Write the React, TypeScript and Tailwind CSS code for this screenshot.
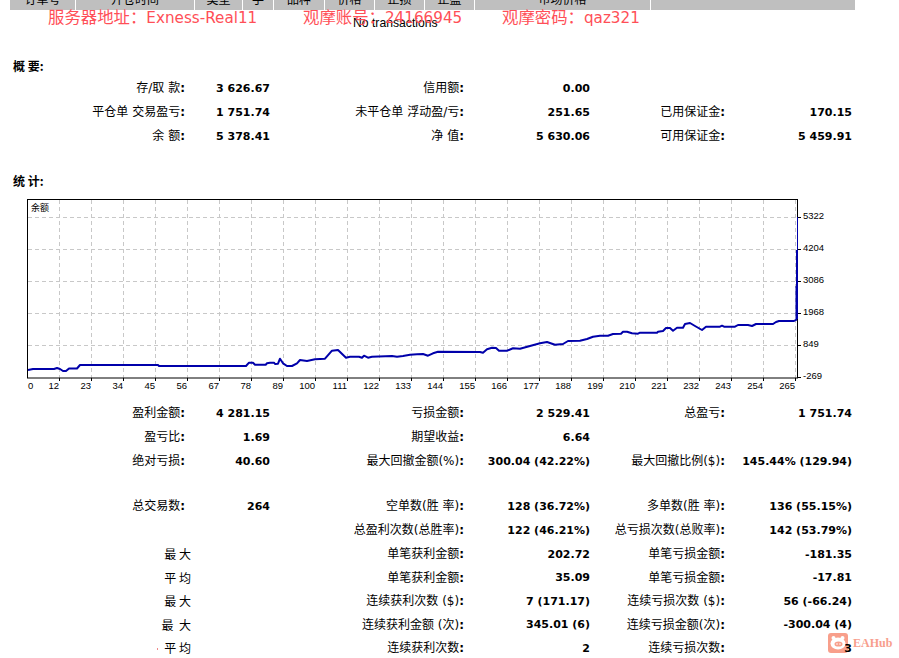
import React from 'react';

const cjk = "font-['Noto_Sans_CJK_SC','Noto_Sans',sans-serif]";
const mixed = "font-['DejaVu_Sans','Noto_Sans_CJK_SC',sans-serif]";

const headers = [
  { w: 'w-[65px]', t: '订单号' },
  { w: 'w-[118px]', t: '开仓时间' },
  { w: 'w-[47px]', t: '类型' },
  { w: 'w-[30px]', t: '手' },
  { w: 'w-[50px]', t: '品种' },
  { w: 'w-[49px]', t: '价格' },
  { w: 'w-[49px]', t: '止损' },
  { w: 'w-[49px]', t: '止盈' },
  { w: 'w-[175px]', t: '市场价格' },
  { w: 'w-[204px]', t: '' },
];

const line =
  '28,370 33,369 54,369 57,368 60,369 63,371 66,371 69,368.5 77,368.5 80,365 158,365 159,366 246,366 249,362.7 253,362.7 255,364.7 265.7,364.7 267,363.3 270,362.7 274,362.7 275,364 278,363.7 280,358.7 283,363.3 287,366 292,366 297,363.3 300,360 307,361 315,359.3 325,358.7 332,350.7 338,350 346,357.7 350,356.7 359,356.7 362,357.7 364,355.7 368,357.7 372,356.7 392,356 397,356.7 403,356 410,354.7 417,354.3 423,354 428,355.7 433,353.3 438,351.7 480,352 483,352.7 487,349.3 492,347.7 496,348 499,350.7 507,350.7 513,348.3 520,348.7 530,346 540,343.3 547,342 555,344.7 563,344 568,341 580,340.7 587,339 593,336.7 600,335.7 608,335.7 613,334 621,333.7 623,331.7 627,331.7 632,333.3 638,333.7 640,332.7 657,332.7 658,331.7 663,331 666,328 670,328 673,330.7 677,327.7 683,327.7 685,324 690,323 695,326 702,330 706,326.7 720,326.7 722,325.7 724,326.7 735,326.7 738,325 748,325 752,326 756,324 773,324 776,322 779,321 794,321 797,319.3';

const xLabels = [12, 23, 34, 45, 56, 67, 78, 89, 100, 111, 122, 133, 144, 155, 166, 177, 188, 199, 210, 221, 232, 243, 254, 265];
const yLabels = [
  { t: '5322', y: 218.5 },
  { t: '4204', y: 250.5 },
  { t: '3086', y: 283 },
  { t: '1968', y: 315 },
  { t: '849', y: 347 },
  { t: '-269', y: 379 },
];

const Label = ({ text, colon = true }: { text: string; colon?: boolean }) => (
  <span className={`whitespace-pre text-right text-[12px] text-black ${mixed}`}>
    {text}
    {colon && <b className="font-bold">:</b>}
  </span>
);

const Value = ({ text }: { text?: string }) => (
  <span className="whitespace-pre text-right font-['DejaVu_Sans',sans-serif] text-[11px] font-bold text-black">{text}</span>
);

type RowData = [string, string, string, string, string?, string?];

const Row = ({ r, first, h = 'h-6' }: { r: RowData; first?: React.ReactNode; h?: string }) => (
  <div className={`grid ${h} grid-cols-[185px_85px_194px_126px_135px_127px] items-center leading-none`}>
    {first ?? <Label text={r[0]} colon={r[0] !== ''} />}
    <Value text={r[1]} />
    <Label text={r[2]} />
    <Value text={r[3]} />
    {r[4] ? <Label text={r[4]} /> : <span />}
    <Value text={r[5]} />
  </div>
);

const Wide = ({ text, dot }: { text: string; dot?: boolean }) => (
  <span className={`relative -mr-[6px] whitespace-pre text-right text-[12px] text-black ${cjk}`}>
    {dot && <i className="absolute right-[33px] top-[6px] h-[2px] w-[1px] bg-[#e88]" />}
    {text}
  </span>
);

const Chart = () => (
  <svg width="840" height="200" viewBox="0 0 840 200" className="ml-[20px] block">
    <g transform="translate(-20 -190)">
      <g stroke="#c8c8c8" strokeWidth="1" strokeDasharray="4 3" fill="none">
        {xLabels.map((_, i) => (
          <line key={i} x1={59.5 + i * 32} y1="200" x2={59.5 + i * 32} y2="378" />
        ))}
        {[217.5, 249.5, 281.5, 313.5, 345.5].map((y) => (
          <line key={y} x1="28" y1={y} x2="797" y2={y} />
        ))}
      </g>
      <rect x="27.5" y="199.5" width="770" height="178.5" fill="none" stroke="#000" strokeWidth="1" />
      {xLabels.map((_, i) => (
        <line key={i} x1={59.5 + i * 32} y1="378" x2={59.5 + i * 32} y2="381" stroke="#000" />
      ))}
      {[217.5, 249.5, 281.5, 313.5, 345.5, 377.5].map((y) => (
        <line key={y} x1="798" y1={y} x2="801" y2={y} stroke="#000" />
      ))}
      <polyline points={line} fill="none" stroke="#0000aa" strokeWidth="2" strokeLinejoin="round" />
      <line x1="797" y1="319" x2="797" y2="250" stroke="#0000aa" strokeWidth="2" />
      <line x1="796.5" y1="319" x2="796.5" y2="286" stroke="#0000aa" strokeWidth="2" />
      <line x1="797.5" y1="250" x2="797.5" y2="217" stroke="#0000aa" strokeWidth="1" />
      <g fontFamily="'Liberation Sans', sans-serif" fontSize="9.5" fill="#000">
        <text x="28" y="389">0</text>
        {xLabels.map((l, i) => (
          <text key={l} x={59 + i * 32} y="389" textAnchor="end">
            {l}
          </text>
        ))}
        {yLabels.map((l) => (
          <text key={l.t} x="803" y={l.y}>
            {l.t}
          </text>
        ))}
      </g>
      <text x="31" y="211" fontFamily="'Noto Sans CJK SC', sans-serif" fontSize="9" fill="#000">
        余额
      </text>
    </g>
  </svg>
);

const Watermark = () => (
  <div className="absolute left-[828px] top-[633px] flex items-center gap-[5px] opacity-60">
    <svg width="20" height="20" viewBox="0 0 20 20">
      <rect width="20" height="20" rx="3" fill="#f4603f" />
      <circle cx="5.5" cy="5" r="2" fill="#fff" />
      <circle cx="14.5" cy="5" r="2" fill="#fff" />
      <ellipse cx="10" cy="10.5" rx="7.5" ry="6" fill="#fff" />
      <ellipse cx="10.5" cy="11" rx="4" ry="2.6" fill="#f4603f" />
      <circle cx="9" cy="11" r="0.8" fill="#fff" />
      <circle cx="12" cy="11" r="0.8" fill="#fff" />
    </svg>
    <span className="font-['Liberation_Serif',serif] text-[12px] font-bold leading-none text-[#f4603f]">EAHub</span>
  </div>
);

const Latin = ({ children }: { children: React.ReactNode }) => (
  <span className="font-['DejaVu_Sans',sans-serif] text-[15.2px]">{children}</span>
);

export default function App() {
  return (
    <div className="relative h-[658px] w-[899px] overflow-hidden bg-white">
      <div className="ml-[10px] flex h-[10px] w-[845px] gap-px">
        {headers.map((h, i) => (
          <div key={i} className={`${h.w} h-[10px] overflow-hidden bg-[#bfbfbf] text-center text-[12px] leading-none text-black ${cjk}`}>
            <div className="-mt-[7px]">{h.t}</div>
          </div>
        ))}
      </div>

      <div className="ml-[353px] mt-[6px] h-[14px] font-['Liberation_Sans',sans-serif] text-[12.2px] leading-[14px] text-black">No transactions</div>

      <div className={`absolute left-[48px] top-[7px] flex whitespace-pre text-[16.4px] leading-[18px] text-[#ff4f57] ${cjk}`}>
        <span className="w-[255px]">服务器地址：<Latin>Exness-Real11</Latin></span>
        <span className="w-[199px]">观摩账号：<Latin>24166945</Latin></span>
        <span>观摩密码：<Latin>qaz321</Latin></span>
      </div>

      <h2 className={`ml-[13px] mt-[27px] h-[18px] text-[12px] font-bold leading-[18px] text-black ${cjk}`}>概 要:</h2>
      <div className="mt-[1px]">
        <Row r={['存/取 款', '3 626.67', '信用额', '0.00']} />
        <Row r={['平仓单 交易盈亏', '1 751.74', '未平仓单 浮动盈/亏', '251.65', '已用保证金', '170.15']} />
        <Row r={['余 额', '5 378.41', '净 值', '5 630.06', '可用保证金', '5 459.91']} />
      </div>

      <h2 className={`ml-[13px] mt-[24px] h-[18px] text-[12px] font-bold leading-[18px] text-black ${cjk}`}>统 计:</h2>
      <Chart />

      <div className="relative z-10 mt-[11px]">
        <Row r={['盈利金额', '4 281.15', '亏损金额', '2 529.41', '总盈亏', '1 751.74']} />
        <Row r={['盈亏比', '1.69', '期望收益', '6.64']} />
        <Row r={['绝对亏损', '40.60', '最大回撤金额(%)', '300.04 (42.22%)', '最大回撤比例($)', '145.44% (129.94)']} />
        <div className="h-[21px]" />
        <Row r={['总交易数', '264', '空单数(胜 率)', '128 (36.72%)', '多单数(胜 率)', '136 (55.15%)']} />
        <Row r={['', '', '总盈利次数(总胜率)', '122 (46.21%)', '总亏损次数(总败率)', '142 (53.79%)']} />
        <Row first={<Wide text="最 大" />} r={['', '', '单笔获利金额', '202.72', '单笔亏损金额', '-181.35']} />
        <Row h="h-[23.5px]" first={<Wide text="平 均" />} r={['', '', '单笔获利金额', '35.09', '单笔亏损金额', '-17.81']} />
        <Row h="h-[23.5px]" first={<Wide text="最 大" />} r={['', '', '连续获利次数 ($)', '7 (171.17)', '连续亏损次数 ($)', '56 (-66.24)']} />
        <Row h="h-[23.5px]" first={<Wide text="最  大" />} r={['', '', '连续获利金额 (次)', '345.01 (6)', '连续亏损金额(次)', '-300.04 (4)']} />
        <Row h="h-[23.5px]" first={<Wide text="平 均" dot />} r={['', '', '连续获利次数', '2', '连续亏损次数', '3']} />
      </div>

      <Watermark />
    </div>
  );
}
